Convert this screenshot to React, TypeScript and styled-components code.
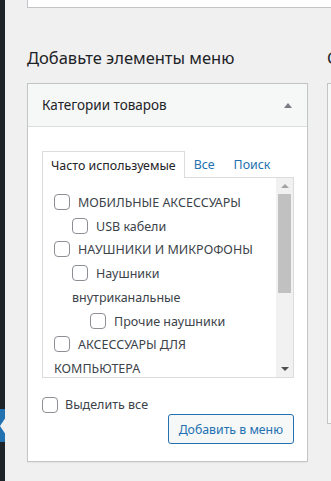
import React from 'react';
import styled, { createGlobalStyle } from 'styled-components';

const GlobalStyle = createGlobalStyle`
  html, body {
    margin: 0;
    padding: 0;
    background: #f0f0f1;
  }
  body {
    font-family: "Noto Sans", "Open Sans", sans-serif;
    color: #3c434a;
    overflow: hidden;
  }
  * { box-sizing: border-box; }
`;

type Category = { name: string; children?: Category[] };

const categories: Category[] = [
  { name: 'МОБИЛЬНЫЕ АКСЕССУАРЫ', children: [{ name: 'USB кабели' }] },
  {
    name: 'НАУШНИКИ И МИКРОФОНЫ',
    children: [{ name: 'Наушники внутриканальные', children: [{ name: 'Прочие наушники' }] }],
  },
  { name: 'АКСЕССУАРЫ ДЛЯ КОМПЬЮТЕРА' },
];

const App: React.FC = () => {
  return (
    <>
      <GlobalStyle />
      <Page>
        <Sidebar>
          <CurrentItem>
            <svg width="5" height="18" viewBox="0 0 5 18">
              <polygon points="6,0 0,9 6,18" fill="#f0f0f1" />
            </svg>
          </CurrentItem>
        </Sidebar>
        <Main>
          <TopBox />
          <Columns>
            <LeftColumn>
              <Heading>Добавьте элементы меню</Heading>
              <Card>
                <CardHeader>
                  <span>Категории товаров</span>
                  <svg width="8" height="5" viewBox="0 0 8 5">
                    <polygon points="0,5 4,0 8,5" fill="#787c82" />
                  </svg>
                </CardHeader>
                <CardBody>
                  <Tabs>
                    <ActiveTab>Часто используемые</ActiveTab>
                    <TabLink>Все</TabLink>
                    <TabLink>Поиск</TabLink>
                    <TabFiller />
                  </Tabs>
                  <Panel>
                    <ChecklistBox>
                      <CheckList items={categories} />
                    </ChecklistBox>
                    <Scrollbar>
                      <ScrollButton>
                        <svg width="8" height="4" viewBox="0 0 8 4">
                          <polygon points="0,4 4,0 8,4" fill="#a3a3a3" />
                        </svg>
                      </ScrollButton>
                      <Track>
                        <Thumb />
                      </Track>
                      <ScrollButton>
                        <svg width="8" height="4" viewBox="0 0 8 4">
                          <polygon points="0,0 8,0 4,4" fill="#505050" />
                        </svg>
                      </ScrollButton>
                    </Scrollbar>
                  </Panel>
                  <SelectAll>
                    <Checkbox />
                    <span>Выделить все</span>
                  </SelectAll>
                  <Actions>
                    <AddButton>Добавить в меню</AddButton>
                  </Actions>
                </CardBody>
              </Card>
            </LeftColumn>
            <RightColumn>
              <Heading>Структура меню</Heading>
              <StructureBox />
            </RightColumn>
          </Columns>
        </Main>
      </Page>
    </>
  );
};

const CheckList: React.FC<{ items: Category[]; nested?: boolean }> = ({ items, nested }) => (
  <List $nested={nested}>
    {items.map((item) => (
      <Item key={item.name}>
        <Checkbox />
        <span>{item.name}</span>
        {item.children && <CheckList items={item.children} nested />}
      </Item>
    ))}
  </List>
);

const Page = styled.div`
  display: flex;
  width: 331px;
  height: 481px;
  overflow: hidden;
`;

const Sidebar = styled.div`
  flex: none;
  width: 5px;
  background: #1d2327;
  padding-top: 409px;
`;

const CurrentItem = styled.div`
  height: 33px;
  background: #2271b1;
  display: flex;
  align-items: center;
  justify-content: flex-end;

  svg { display: block; }
`;

const Main = styled.div`
  flex: 1;
  min-width: 0;
  padding-left: 22px;
`;

const TopBox = styled.div`
  height: 8px;
  width: 400px;
  background: #fff;
  border: 1px solid #c3c4c7;
  border-top: none;
`;

const Columns = styled.div`
  display: flex;
  gap: 19px;
  margin-top: 38px;
`;

const LeftColumn = styled.div`
  flex: none;
  width: 281px;
`;

const RightColumn = styled.div`
  flex: none;
  width: 200px;
`;

const Heading = styled.h2`
  margin: 0 0 13px;
  font-size: 16.5px;
  font-weight: 400;
  line-height: 24px;
  color: #1d2327;
  white-space: nowrap;
`;

const Card = styled.div`
  background: #fff;
  border: 1px solid #c3c4c7;
  box-shadow: 0 1px 1px rgba(0, 0, 0, 0.04);
`;

const CardHeader = styled.div`
  display: flex;
  align-items: center;
  justify-content: space-between;
  height: 43px;
  padding: 0 14px;
  background: #f6f7f7;
  border-bottom: 1px solid #dcdcde;
  font-size: 13.5px;
  color: #1d2327;

  svg { display: block; margin-right: 1px; }
`;

const CardBody = styled.div`
  padding: 24px 13px 17px 14px;
`;

const Tabs = styled.div`
  display: flex;
  height: 27px;
  font-size: 12.4px;
`;

const ActiveTab = styled.div`
  display: flex;
  align-items: center;
  padding: 0 8px;
  border: 1px solid #dcdcde;
  border-bottom: none;
  background: #fff;
  color: #1d2327;
  white-space: nowrap;
`;

const TabLink = styled.div`
  display: flex;
  align-items: center;
  padding: 0 10px 0 9px;
  border-bottom: 1px solid #dcdcde;
  color: #2271b1;
  white-space: nowrap;
`;

const TabFiller = styled.div`
  flex: 1;
  border-bottom: 1px solid #dcdcde;
`;

const Panel = styled.div`
  display: flex;
  height: 200px;
  border: 1px solid #dcdcde;
  border-top: none;
  background: #fff;
`;

const ChecklistBox = styled.div`
  flex: 1;
  min-width: 0;
  overflow: hidden;
  padding: 13px 22px 0 11px;
`;

const List = styled.ul<{ $nested?: boolean }>`
  list-style: none;
  margin: 0;
  padding: 0 0 0 ${(p) => (p.$nested ? 18 : 0)}px;
`;

const Item = styled.li`
  margin: 0;
  font-size: 12.5px;
  line-height: 23.7px;
  color: #3c434a;
`;

const Checkbox = styled.span`
  display: inline-block;
  width: 16px;
  height: 16px;
  margin: 0 8px 0 0;
  vertical-align: -3px;
  border: 1px solid #8c8f94;
  border-radius: 4px;
  background: #fff;
`;

const Scrollbar = styled.div`
  flex: none;
  width: 17px;
  display: flex;
  flex-direction: column;
  background: #f1f1f1;
`;

const ScrollButton = styled.div`
  height: 16px;
  display: flex;
  align-items: center;
  justify-content: center;

  svg { display: block; }
`;

const Track = styled.div`
  flex: 1;
  padding: 0 2px;
`;

const Thumb = styled.div`
  height: 99px;
  background: #c1c1c1;
`;

const SelectAll = styled.label`
  display: flex;
  align-items: center;
  height: 18px;
  margin-top: 18px;
  font-size: 12.5px;
  line-height: 18px;
  color: #3c434a;

  ${Checkbox} { margin-right: 7px; }
`;

const Actions = styled.div`
  display: flex;
  justify-content: flex-end;
`;

const AddButton = styled.button`
  height: 30px;
  padding: 0 10px;
  font-family: inherit;
  font-size: 12.3px;
  color: #2271b1;
  background: #f6f7f7;
  border: 1px solid #2271b1;
  border-radius: 3px;
`;

const StructureBox = styled.div`
  height: 341px;
  background: #f6f7f7;
  border: 1px solid #c3c4c7;
`;

export default App;
